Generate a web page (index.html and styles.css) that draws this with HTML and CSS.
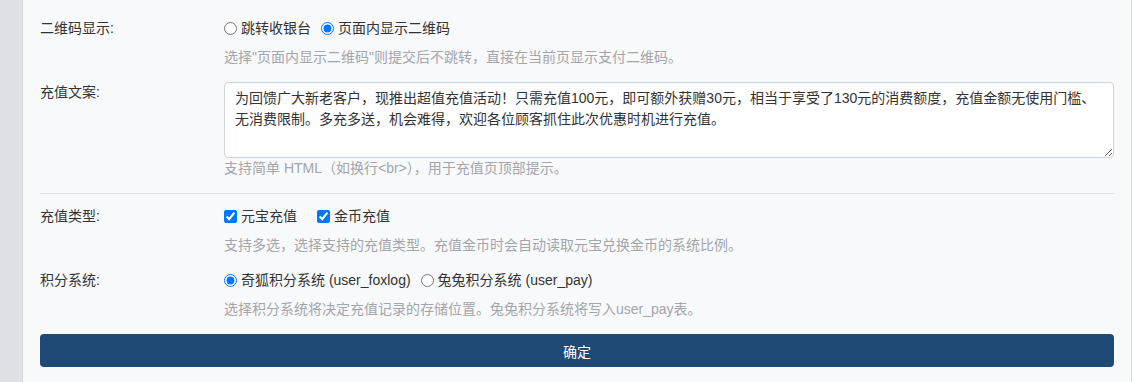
FILE: index.html
```html
<!DOCTYPE html>
<html lang="zh-CN">
<head>
    <meta charset="UTF-8">
    <meta name="viewport" content="width=device-width, initial-scale=1.0">
    <title>充值设置</title>
    <link rel="stylesheet" href="styles.css">
</head>
<body>
    <div class="sidebar"></div>
    <div class="panel">
        <form class="settings">
            <div class="form-row">
                <div class="form-label">二维码显示:</div>
                <div class="form-field">
                    <div class="options">
                        <label class="opt"><input type="radio" name="qrcode"> 跳转收银台</label>
                        <label class="opt"><input type="radio" name="qrcode" checked> 页面内显示二维码</label>
                    </div>
                    <div class="help">选择"页面内显示二维码"则提交后不跳转，直接在当前页显示支付二维码。</div>
                </div>
            </div>

            <div class="form-row">
                <div class="form-label">充值文案:</div>
                <div class="form-field">
                    <textarea class="form-control" rows="3">为回馈广大新老客户，现推出超值充值活动！只需充值100元，即可额外获赠30元，相当于享受了130元的消费额度，充值金额无使用门槛、无消费限制。多充多送，机会难得，欢迎各位顾客抓住此次优惠时机进行充值。</textarea>
                    <div class="help help-tight">支持简单 HTML（如换行&lt;br&gt;），用于充值页顶部提示。</div>
                </div>
            </div>

            <hr class="divider">

            <div class="form-row">
                <div class="form-label">充值类型:</div>
                <div class="form-field">
                    <div class="options">
                        <label class="opt opt-check"><input type="checkbox" checked> 元宝充值</label>
                        <label class="opt opt-check"><input type="checkbox" checked> 金币充值</label>
                    </div>
                    <div class="help">支持多选，选择支持的充值类型。充值金币时会自动读取元宝兑换金币的系统比例。</div>
                </div>
            </div>

            <div class="form-row">
                <div class="form-label">积分系统:</div>
                <div class="form-field">
                    <div class="options">
                        <label class="opt"><input type="radio" name="points" checked> 奇狐积分系统 (user_foxlog)</label>
                        <label class="opt"><input type="radio" name="points"> 兔兔积分系统 (user_pay)</label>
                    </div>
                    <div class="help">选择积分系统将决定充值记录的存储位置。兔兔积分系统将写入user_pay表。</div>
                </div>
            </div>

            <button type="button" class="btn-submit">确定</button>
        </form>
    </div>
</body>
</html>
```

FILE: styles.css
```css
html, body {
    height: 100%;
}
body {
    margin: 0;
    display: flex;
    font-family: "Liberation Sans", "Noto Sans CJK SC", sans-serif;
    font-size: 14px;
    line-height: 21px;
    color: #333;
    background: #f8f9fa;
}
.sidebar {
    width: 22px;
    flex-shrink: 0;
    background: #dee1e5;
    border-right: 1px solid #d3d6da;
}
.panel {
    flex: 1;
    background: #f8f9fa;
    border-right: 1px solid #d6d9dd;
    padding: 18px 17px 15px;
}
.form-row {
    display: flex;
    margin-bottom: 14px;
}
.form-label {
    width: 184px;
    flex-shrink: 0;
    color: #333;
}
.form-field {
    flex: 1;
    min-width: 0;
}
.options {
    display: flex;
    align-items: center;
    height: 21px;
}
.opt {
    display: flex;
    align-items: center;
    margin-right: 10px;
    white-space: nowrap;
}
.opt-check {
    margin-right: 20px;
}
.opt input {
    margin: 0 4px 0 0;
    width: 13px;
    height: 13px;
}
.help {
    margin-top: 8px;
    color: #a3a6aa;
}
.help-tight {
    margin-top: 0;
}
.form-control {
    display: block;
    box-sizing: border-box;
    width: 100%;
    height: 76px;
    padding: 5px 10px;
    border: 1px solid #ced4da;
    border-radius: 4px;
    background: #fff;
    color: #333;
    font-family: inherit;
    font-size: 14px;
    line-height: 21px;
}
.divider {
    border: 0;
    border-top: 1px solid #dee2e6;
    margin: 0 0 12px;
}
.btn-submit {
    display: block;
    width: 100%;
    height: 33px;
    background: #1f4a75;
    color: #fff;
    border: none;
    border-radius: 4px;
    font-family: inherit;
    font-size: 14px;
    cursor: pointer;
}
.btn-submit:hover {
    opacity: 0.9;
}
```
